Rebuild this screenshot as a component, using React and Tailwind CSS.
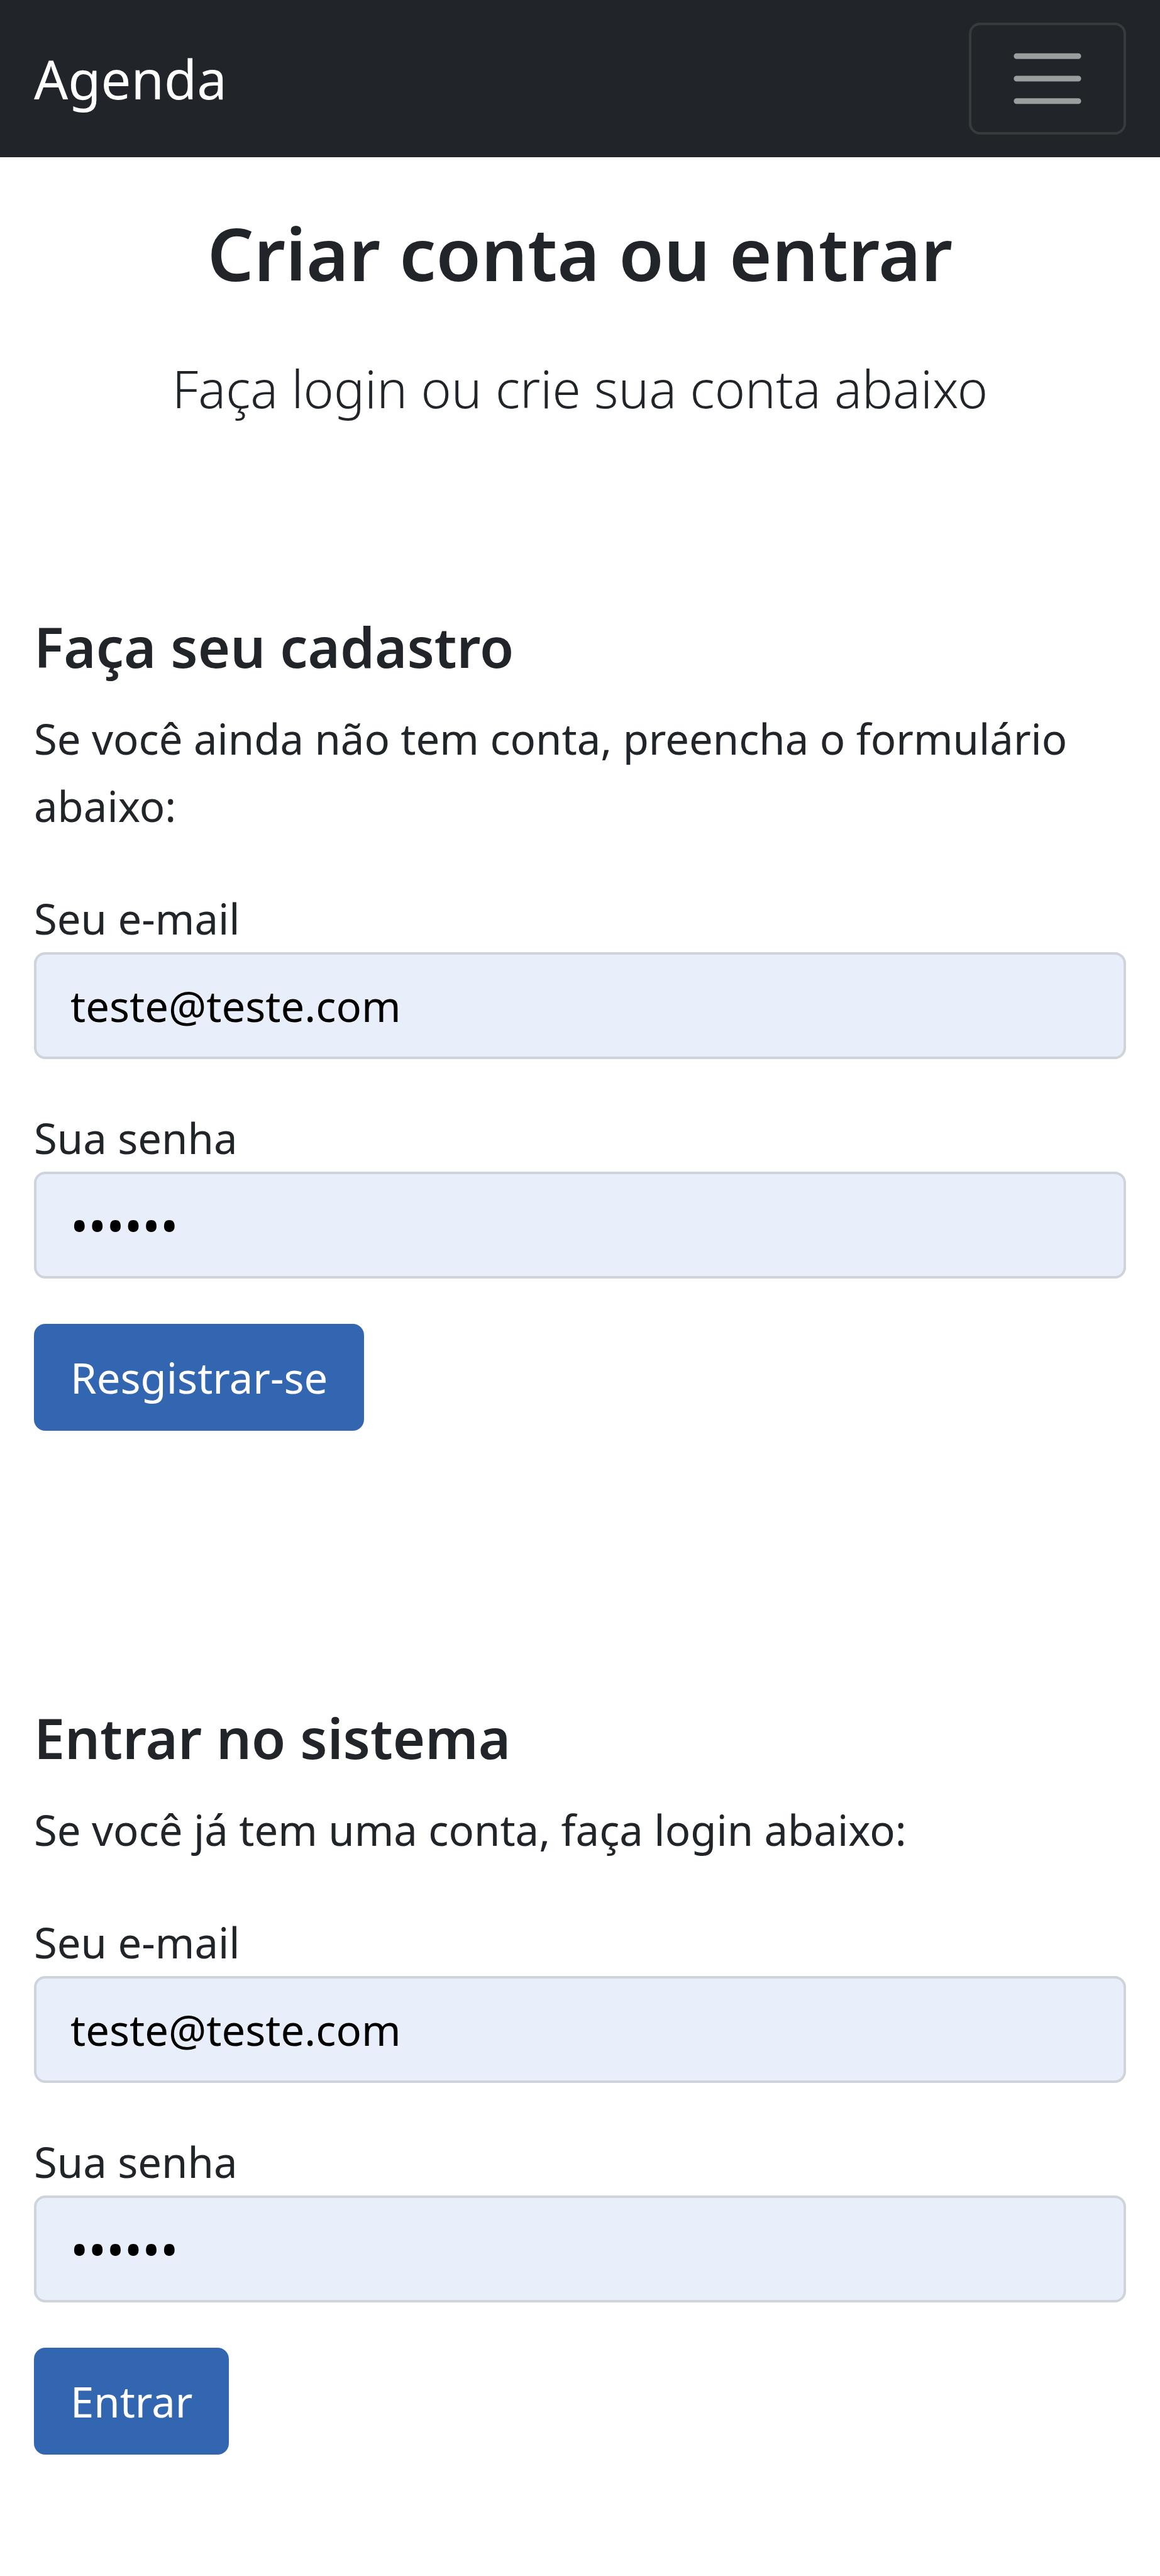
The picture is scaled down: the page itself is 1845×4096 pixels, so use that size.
import React from "react";

function Field({ id, label, type, value, autoComplete, textSize = "text-[67px]" }) {
  return (
    <div className="flex flex-col">
      <label htmlFor={id} className="text-[67px] leading-[107px]">
        {label}
      </label>
      <input
        id={id}
        type={type}
        defaultValue={value}
        autoComplete={autoComplete}
        className={`h-[170px] w-full rounded-[18px] border-4 border-[#ced4da] bg-[#e8eefa] px-[54px] text-black outline-none ${textSize}`}
      />
    </div>
  );
}

function AuthSection({ prefix, title, text, action }) {
  return (
    <section className="flex flex-col items-start">
      <h2 className="text-[88px] leading-[120px] font-semibold">{title}</h2>
      <p className="mt-[33px] text-[67px] leading-[107px]">{text}</p>
      <form
        className="mt-[72px] flex w-full flex-col items-start gap-[72px]"
        onSubmit={(event) => event.preventDefault()}
      >
        <div className="flex w-full flex-col gap-[72px]">
          <Field id={`${prefix}-email`} label="Seu e-mail" type="email" value="teste@teste.com" autoComplete="email" />
          <Field
            id={`${prefix}-password`}
            label="Sua senha"
            type="password"
            value="123456"
            autoComplete="off"
            textSize="text-[76px]"
          />
        </div>
        <button
          type="submit"
          className="h-[170px] rounded-[18px] bg-[#3366b0] px-[58px] text-[67px] leading-[107px] text-white"
        >
          {action}
        </button>
      </form>
    </section>
  );
}

export default function App() {
  return (
    <div className="min-h-screen bg-white font-['Noto_Sans','Open_Sans',sans-serif] text-[#212529]">
      <nav className="flex items-center justify-between bg-[#212529] px-[54px] py-9">
        <a href="#" className="text-[85px] leading-[134px] text-white">
          Agenda
        </a>
        <button
          type="button"
          aria-label="Abrir menu"
          className="flex items-center justify-center rounded-[18px] border-4 border-white/10 px-[54px] py-[18px]"
        >
          <svg viewBox="0 0 30 30" className="size-[134px]" fill="none" stroke="#9b9e9f" strokeWidth="2" strokeLinecap="round">
            <path d="M4 7h22M4 15h22M4 23h22" />
          </svg>
        </button>
      </nav>

      <main className="px-[54px]">
        <header className="flex flex-col items-center pt-[72px] text-center">
          <h1 className="text-[116px] leading-[160px] font-semibold">Criar conta ou entrar</h1>
          <p className="mt-[68px] text-[82px] leading-[134px] font-light">Faça login ou crie sua conta abaixo</p>
        </header>

        <div className="mt-[284px] flex flex-col gap-[428px]">
          <AuthSection
            prefix="register"
            title="Faça seu cadastro"
            text="Se você ainda não tem conta, preencha o formulário abaixo:"
            action="Resgistrar-se"
          />
          <AuthSection
            prefix="login"
            title="Entrar no sistema"
            text="Se você já tem uma conta, faça login abaixo:"
            action="Entrar"
          />
        </div>
      </main>
    </div>
  );
}
